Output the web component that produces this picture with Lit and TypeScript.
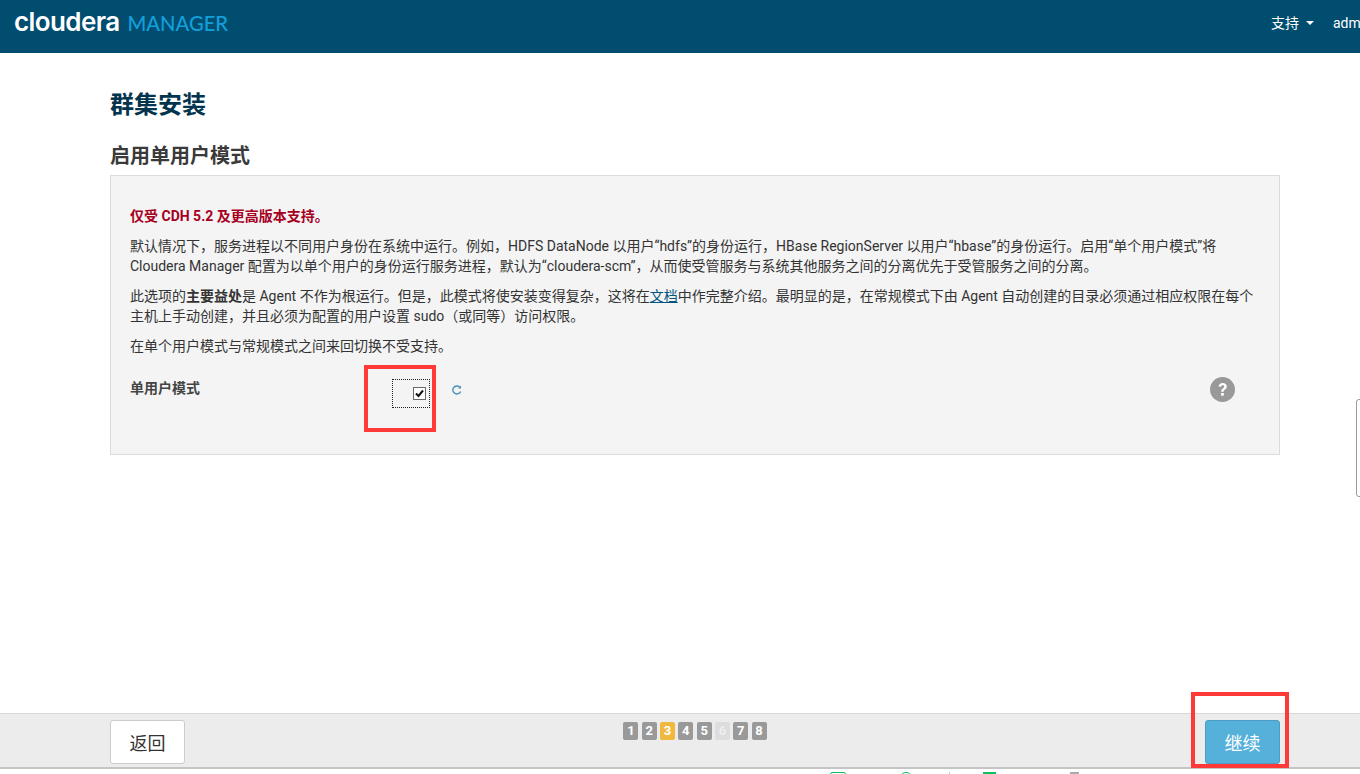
import { LitElement, html, css } from "lit";
import { customElement } from "lit/decorators.js";

const STEPS = [1, 2, 3, 4, 5, 6, 7, 8];

@customElement("app-root")
export class AppRoot extends LitElement {
  static styles = css`
    :host {
      display: flex;
      flex-direction: column;
      position: relative;
      width: 1360px;
      height: 774px;
      overflow: hidden;
      background: #fff;
      font-family: Roboto, "Noto Sans CJK SC", sans-serif;
      font-size: 14px;
      color: #333;
    }
    .nav {
      flex: none;
      height: 53px;
      background: #004d70;
      display: flex;
      align-items: flex-start;
      justify-content: space-between;
      overflow: hidden;
    }
    .logo {
      display: flex;
      align-items: baseline;
      padding: 6px 0 0 14px;
      line-height: 32px;
      white-space: nowrap;
    }
    .logo-main {
      color: #fff;
      font-family: Inter, sans-serif;
      font-size: 26px;
      font-weight: 600;
      letter-spacing: -0.6px;
    }
    .logo-sub {
      color: #12a0dc;
      font-family: Lato, sans-serif;
      font-size: 20.2px;
      font-weight: 500;
      margin-left: 8px;
    }
    .nav-right {
      display: flex;
      align-items: center;
      color: #fff;
      padding-top: 14px;
      line-height: 18px;
      white-space: nowrap;
      width: 89px;
      overflow: hidden;
    }
    .caret {
      flex: none;
      width: 0;
      height: 0;
      border-left: 4px solid transparent;
      border-right: 4px solid transparent;
      border-top: 4px solid #fff;
      margin: 0 19px 0 7px;
    }
    .main {
      flex: 1;
      min-height: 0;
      padding: 0 80px 0 110px;
      box-sizing: border-box;
    }
    h1 {
      margin: 37px 0 0;
      font-size: 24px;
      line-height: 30px;
      font-weight: 700;
      color: #03344e;
    }
    h2 {
      margin: 23px 0 0;
      font-size: 20px;
      line-height: 26px;
      font-weight: 700;
      color: #3a3a3a;
    }
    .panel {
      margin-top: 6px;
      height: 280px;
      box-sizing: border-box;
      background: #f4f4f4;
      border: 1px solid #dcdcdc;
      padding: 30px 19px 0;
      line-height: 20px;
    }
    p {
      margin: 0 0 10px;
    }
    .warn {
      color: #a6001f;
      font-weight: 700;
    }
    a {
      color: #00567f;
      text-decoration: underline;
    }
    .row {
      display: flex;
      align-items: flex-start;
      margin-top: 21px;
    }
    .label {
      width: 262px;
      margin-top: 1px;
      font-weight: 700;
      line-height: 20px;
      color: #444;
    }
    .check-focus {
      width: 38px;
      height: 29px;
      box-sizing: border-box;
      border: 1px dotted #222;
      display: flex;
      align-items: center;
      justify-content: flex-end;
      padding-right: 3px;
      margin-top: 2px;
    }
    .check {
      width: 13px;
      height: 13px;
      box-sizing: border-box;
      border: 1px solid #6a6a6a;
      background: #fff;
      display: block;
    }
    .reset {
      margin: 8px 0 0 22px;
      display: block;
    }
    .help {
      margin: 0 25px 0 auto;
      display: block;
    }
    .footer {
      flex: none;
      height: 56px;
      box-sizing: border-box;
      background: #ececec;
      border-top: 1px solid #d8d8d8;
      border-bottom: 2px solid #c4c4c4;
      padding: 6px 80px 0 110px;
      display: flex;
      justify-content: space-between;
      align-items: flex-start;
    }
    .btn {
      width: 75px;
      height: 44px;
      box-sizing: border-box;
      border-radius: 3px;
      font-size: 18px;
      display: flex;
      align-items: center;
      justify-content: center;
    }
    .back {
      background: #fff;
      border: 1px solid #ccc;
      color: #333;
    }
    .next {
      background: #55b0da;
      border: 1px solid #4b9dc4;
      color: #fff;
    }
    .steps {
      display: flex;
      gap: 3.3px;
      margin-top: 2px;
    }
    .step {
      width: 15px;
      height: 18px;
      border-radius: 2px;
      background: #999;
      color: #fff;
      font-size: 13px;
      font-weight: 700;
      line-height: 18px;
      text-align: center;
    }
    .step.current {
      background: #f0b83e;
    }
    .step.disabled {
      background: #ddd;
      color: #eee;
    }
    .tray {
      flex: none;
      height: 5px;
      box-sizing: border-box;
      display: flex;
      overflow: hidden;
      padding: 3px 0 0 830px;
    }
    .tray i {
      display: block;
      box-sizing: border-box;
      height: 8px;
      flex: none;
    }
    .t1 {
      width: 16px;
      border: 1px solid #0cc060;
      border-radius: 2px;
    }
    .t2 {
      width: 10px;
      margin-left: 55px;
      border: 1px solid #0cc060;
      border-radius: 50%;
    }
    .t5 {
      width: 1px;
      margin-left: 38px;
      background: #9fd8ee;
    }
    .t3 {
      width: 13px;
      margin-left: 33px;
      background: #0cc060;
    }
    .t4 {
      width: 9px;
      margin-left: 74px;
      background: #aaa;
    }
    .mark {
      position: absolute;
      box-sizing: border-box;
      border: 4px solid #ff3838;
      pointer-events: none;
    }
    .mark-check {
      left: 364px;
      top: 365px;
      width: 72px;
      height: 67px;
    }
    .mark-next {
      left: 1191px;
      top: 692px;
      width: 98px;
      height: 76px;
    }
    .edge-tab {
      position: absolute;
      left: 1356px;
      top: 399px;
      width: 10px;
      height: 98px;
      box-sizing: border-box;
      background: #fff;
      border: 1px solid #9a9a9a;
      border-radius: 3px;
    }
  `;

  render() {
    return html`
      <header class="nav">
        <div class="logo">
          <span class="logo-main">cloudera</span>
          <span class="logo-sub">MANAGER</span>
        </div>
        <div class="nav-right">
          <span>支持</span><span class="caret"></span><span>adm</span>
        </div>
      </header>
      <main class="main">
        <h1>群集安装</h1>
        <h2>启用单用户模式</h2>
        <section class="panel">
          <p class="warn">仅受 CDH 5.2 及更高版本支持。</p>
          <p>
            默认情况下，服务进程以不同用户身份在系统中运行。例如，HDFS DataNode 以用户“hdfs”的身份运行，HBase RegionServer 以用户“hbase”的身份运行。启用“单个用户模式”将
            Cloudera Manager 配置为以单个用户的身份运行服务进程，默认为“cloudera-scm”，从而使受管服务与系统其他服务之间的分离优先于受管服务之间的分离。
          </p>
          <p>
            此选项的<b>主要益处</b>是 Agent 不作为根运行。但是，此模式将使安装变得复杂，这将在<a href="#">文档</a>中作完整介绍。最明显的是，在常规模式下由 Agent 自动创建的目录必须通过相应权限在每个主机上手动创建，并且必须为配置的用户设置 sudo（或同等）访问权限。
          </p>
          <p>在单个用户模式与常规模式之间来回切换不受支持。</p>
          <div class="row">
            <div class="label">单用户模式</div>
            <div class="check-focus">
              <svg class="check" viewBox="0 0 11 11" aria-hidden="true">
                <path d="M2 5.5 L4.5 8 L9 2.5" fill="none" stroke="#111" stroke-width="2" />
              </svg>
            </div>
            <svg class="reset" width="10" height="10" viewBox="0 0 10 10" aria-hidden="true">
              <path d="M8.6 6.4 A4 4 0 1 1 7.6 2" fill="none" stroke="#4a8fb5" stroke-width="1.4" />
              <path d="M9 0.4 V3.4 H6 Z" fill="#4a8fb5" />
            </svg>
            <svg class="help" width="25" height="25" viewBox="0 0 25 25" aria-hidden="true">
              <circle cx="12.5" cy="12.5" r="12.5" fill="#999" />
              <path d="M8.6 9.6 C8.8 7.3 10.5 6 12.7 6 C15 6 16.8 7.4 16.8 9.5 C16.8 11.2 15.8 12 14.7 12.8 C13.9 13.4 13.7 13.8 13.7 14.8 H11.2 C11.2 13.2 11.6 12.4 12.8 11.5 C13.7 10.8 14.2 10.4 14.2 9.6 C14.2 8.7 13.6 8.2 12.7 8.2 C11.8 8.2 11.2 8.8 11.1 9.8 Z" fill="#fff" />
              <rect x="11.1" y="16" width="2.7" height="2.7" fill="#fff" />
            </svg>
          </div>
        </section>
      </main>
      <footer class="footer">
        <div class="btn back">返回</div>
        <div class="steps">
          ${STEPS.map(
            (n) =>
              html`<div class="step ${n === 3 ? "current" : n === 6 ? "disabled" : ""}">${n}</div>`
          )}
        </div>
        <div class="btn next">继续</div>
      </footer>
      <div class="tray"><i class="t1"></i><i class="t2"></i><i class="t5"></i><i class="t3"></i><i class="t4"></i></div>
      <div class="mark mark-check"></div>
      <div class="mark mark-next"></div>
      <div class="edge-tab"></div>
    `;
  }
}
